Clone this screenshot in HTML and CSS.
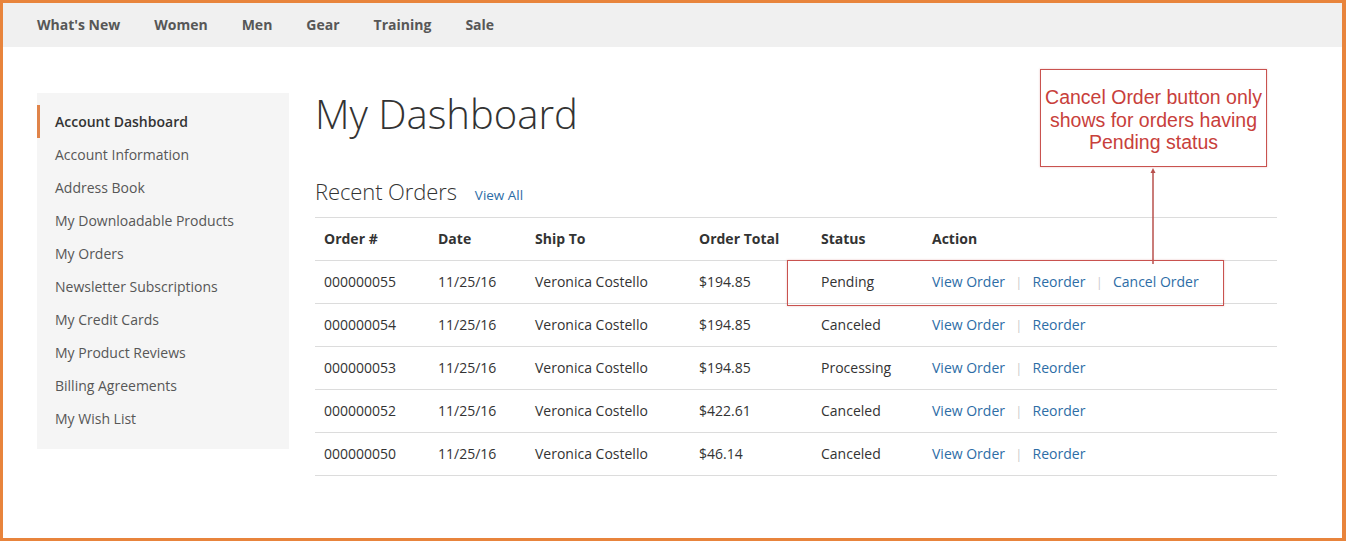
FILE: index.html
```html
<!DOCTYPE html>
<html lang="en">
<head>
<meta charset="utf-8">
<title>My Dashboard</title>
<link rel="stylesheet" href="styles.css">
</head>
<body>
<div class="frame">
  <nav class="topnav">
    <a href="#">What's New</a>
    <a href="#">Women</a>
    <a href="#">Men</a>
    <a href="#">Gear</a>
    <a href="#">Training</a>
    <a href="#">Sale</a>
  </nav>
  <div class="page">
    <aside class="sidebar">
      <ul class="side-list">
        <li class="active">Account Dashboard</li>
        <li>Account Information</li>
        <li>Address Book</li>
        <li>My Downloadable Products</li>
        <li>My Orders</li>
        <li>Newsletter Subscriptions</li>
        <li>My Credit Cards</li>
        <li>My Product Reviews</li>
        <li>Billing Agreements</li>
        <li>My Wish List</li>
      </ul>
    </aside>
    <main class="content">
      <h1 class="title">My Dashboard</h1>
      <div class="section-head">
        <h2>Recent Orders</h2>
        <a href="#" class="view-all">View All</a>
      </div>
      <table class="orders">
        <colgroup>
          <col class="c1"><col class="c2"><col class="c3"><col class="c4"><col class="c5"><col>
        </colgroup>
        <thead>
          <tr><th>Order #</th><th>Date</th><th>Ship To</th><th>Order Total</th><th>Status</th><th>Action</th></tr>
        </thead>
        <tbody>
          <tr><td>000000055</td><td>11/25/16</td><td>Veronica Costello</td><td>$194.85</td><td>Pending</td>
            <td><a href="#">View Order</a><span class="sep">|</span><a href="#">Reorder</a><span class="sep">|</span><a href="#">Cancel Order</a></td></tr>
          <tr><td>000000054</td><td>11/25/16</td><td>Veronica Costello</td><td>$194.85</td><td>Canceled</td>
            <td><a href="#">View Order</a><span class="sep">|</span><a href="#">Reorder</a></td></tr>
          <tr><td>000000053</td><td>11/25/16</td><td>Veronica Costello</td><td>$194.85</td><td>Processing</td>
            <td><a href="#">View Order</a><span class="sep">|</span><a href="#">Reorder</a></td></tr>
          <tr><td>000000052</td><td>11/25/16</td><td>Veronica Costello</td><td>$422.61</td><td>Canceled</td>
            <td><a href="#">View Order</a><span class="sep">|</span><a href="#">Reorder</a></td></tr>
          <tr><td>000000050</td><td>11/25/16</td><td>Veronica Costello</td><td>$46.14</td><td>Canceled</td>
            <td><a href="#">View Order</a><span class="sep">|</span><a href="#">Reorder</a></td></tr>
        </tbody>
      </table>
    </main>
  </div>
  <div class="note">Cancel Order button only shows for orders having Pending status</div>
  <svg class="arrow" width="12" height="96" viewBox="0 0 12 96">
    <line x1="6" y1="3" x2="6" y2="96" stroke="#b8504d" stroke-width="1.5"/>
    <polygon points="6,0 3.5,5 8.5,5" fill="#b8504d"/>
  </svg>
  <div class="highlight"></div>
</div>
</body>
</html>
```
FILE: styles.css
```css
* { box-sizing: border-box; }
html, body { margin: 0; padding: 0; background: #fff; }
body {
  font-family: "Open Sans", "Liberation Sans", sans-serif;
  color: #333;
  font-size: 14px;
}
.frame {
  position: relative;
  width: 1346px;
  height: 541px;
  border: 3px solid #e8843c;
  border-right-width: 4px;
  overflow: hidden;
}
.topnav {
  height: 44px;
  background: #f0f0f0;
  display: flex;
  align-items: center;
  gap: 34px;
  padding-left: 34px;
  padding-bottom: 2px;
}
.topnav a {
  color: #575757;
  font-weight: 700;
  font-size: 14px;
  text-decoration: none;
}
.page {
  display: flex;
  padding-left: 34px;
  padding-top: 46px;
  gap: 26px;
}
.sidebar {
  width: 252px;
  background: #f5f5f5;
  padding: 12px 0 14px;
  height: 356px;
}
.side-list { list-style: none; margin: 0; padding: 0; }
.side-list li {
  height: 33px;
  line-height: 33px;
  padding-left: 15px;
  color: #575757;
  font-size: 14px;
  border-left: 3px solid transparent;
}
.side-list li.active {
  color: #333;
  font-weight: 600;
  border-left-color: #e0844a;
}
.content { width: 962px; }
.title {
  margin: 0;
  font-weight: 300;
  font-size: 40px;
  line-height: 42px;
  color: #333;
  height: 78px;
}
.section-head {
  display: flex;
  align-items: baseline;
  gap: 18px;
  height: 46px;
  padding-top: 5px;
}
.section-head h2 {
  margin: 0;
  font-weight: 300;
  font-size: 22px;
  letter-spacing: -0.1px;
  color: #333;
}
.view-all {
  color: #2d6da6;
  font-size: 13.5px;
  text-decoration: none;
}
.orders {
  width: 962px;
  border-collapse: collapse;
  table-layout: fixed;
}
.c1 { width: 114px; }
.c2 { width: 97px; }
.c3 { width: 164px; }
.c4 { width: 122px; }
.c5 { width: 111px; }
.orders th, .orders td {
  text-align: left;
  height: 43px;
  padding: 0 0 1px 9px;
  border-top: 1px solid #dcdcdc;
  white-space: nowrap;
  font-size: 14px;
}
.orders th { font-weight: 700; color: #333; }
.orders tbody tr:last-child td { border-bottom: 1px solid #dcdcdc; }
.orders a { color: #2d6da6; text-decoration: none; }
.sep { color: #c8c8c8; margin: 0 10.5px; font-size: 12px; }
.note {
  position: absolute;
  left: 1037px;
  top: 66px;
  width: 227px;
  height: 98px;
  border: 1px solid #c9524f;
  color: #c8403b;
  font-family: "Liberation Sans", Arial, sans-serif;
  font-size: 19.5px;
  line-height: 22.5px;
  text-align: center;
  padding: 16px 0 0;
  box-shadow: 0 0 2px rgba(180,60,60,0.3);
}
.arrow {
  position: absolute;
  left: 1144px;
  top: 165px;
}
.highlight {
  position: absolute;
  left: 784px;
  top: 257px;
  width: 437px;
  height: 46px;
  border: 1.5px solid #c9524f;
  box-shadow: 0 0 2px rgba(180,60,60,0.3);
}
```
